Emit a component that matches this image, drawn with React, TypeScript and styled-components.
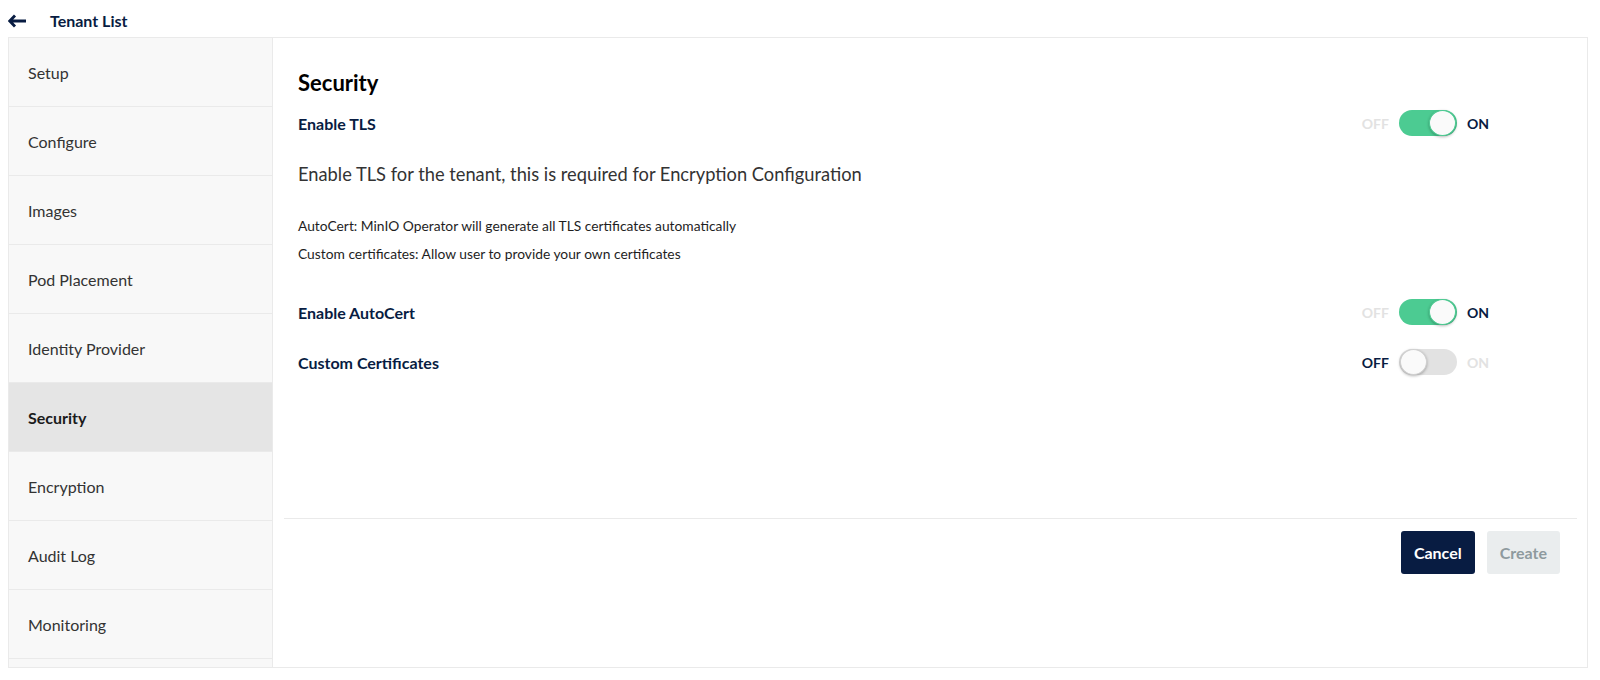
import React, { useState } from 'react'
import styled, { createGlobalStyle } from 'styled-components'

const GlobalStyle = createGlobalStyle`
  html, body {
    margin: 0;
    padding: 0;
    background: #ffffff;
    font-family: Lato, "Noto Sans", sans-serif;
    -webkit-font-smoothing: antialiased;
  }
  * { box-sizing: border-box; }
`

const Page = styled.div`
  width: 1600px;
  height: 680px;
  overflow: hidden;
`

const TopBar = styled.div`
  height: 37px;
  display: flex;
  align-items: center;
  padding: 4px 0 0 8px;
`

const BackLink = styled.a`
  display: flex;
  align-items: center;
  gap: 23px;
  color: #081c42;
  font-size: 16px;
  font-weight: 700;
  text-decoration: none;
  cursor: pointer;
`

const Panel = styled.div`
  display: flex;
  height: 631px;
  margin: 0 12px 0 8px;
  border: 1px solid #eaeaea;
`

const Sidebar = styled.nav`
  width: 264px;
  flex-shrink: 0;
  background: #f8f8f8;
  border-right: 1px solid #eaeaea;
  overflow: hidden;
`

const NavItem = styled.div<{ $active?: boolean }>`
  height: 69px;
  display: flex;
  align-items: center;
  padding-left: 19px;
  border-bottom: 1px solid #eaeaea;
  background: ${p => (p.$active ? '#e5e5e5' : 'transparent')};
  color: ${p => (p.$active ? '#1b1b1b' : '#333333')};
  font-size: 16px;
  font-weight: ${p => (p.$active ? 700 : 400)};
  cursor: pointer;
`

const Content = styled.div`
  flex: 1;
  display: flex;
  flex-direction: column;
  padding: 0 10px 0 11px;
`

const Form = styled.div`
  height: 481px;
  padding: 32px 88px 0 14px;
  border-bottom: 1px solid #eaeaea;
`

const Heading = styled.h3`
  margin: 0 0 12px;
  font-size: 22px;
  line-height: 26px;
  font-weight: 700;
  color: #000000;
`

const SwitchRow = styled.div<{ $gap?: number }>`
  display: flex;
  align-items: center;
  justify-content: space-between;
  height: 30px;
  margin-bottom: ${p => p.$gap ?? 0}px;
`

const RowLabel = styled.label`
  font-size: 16px;
  font-weight: 700;
  color: #081c42;
`

const Description = styled.p`
  margin: 24px 0 26px;
  font-size: 18.3px;
  line-height: 24px;
  color: #333333;
`

const Note = styled.div`
  font-size: 13.8px;
  line-height: 28px;
  color: #1e1e1e;
`

const Notes = styled.div`
  margin-bottom: 29px;
`

const SwitchWrap = styled.div`
  display: flex;
  align-items: center;
  gap: 10px;
`

const SwitchText = styled.span<{ $on: boolean }>`
  font-size: 14px;
  font-weight: 700;
  color: ${p => (p.$on ? '#081c42' : '#e2e2e2')};
`

const Track = styled.button<{ $on: boolean }>`
  position: relative;
  width: 58px;
  height: 26px;
  padding: 0;
  border: none;
  border-radius: 13px;
  background: ${p => (p.$on ? '#4ccb92' : '#e2e2e2')};
  cursor: pointer;
`

const Knob = styled.span<{ $on: boolean }>`
  position: absolute;
  top: 0;
  left: ${p => (p.$on ? '30px' : '1px')};
  width: 27px;
  height: 26px;
  border-radius: 50%;
  background: #fafafa;
  border: 1px solid ${p => (p.$on ? '#4ccb92' : '#d0d0d0')};
  box-shadow: 0 1px 3px rgba(0, 0, 0, 0.3);
`

const Footer = styled.div`
  display: flex;
  justify-content: flex-end;
  gap: 12px;
  padding: 12px 17px 0 0;
`

const Button = styled.button<{ $primary?: boolean }>`
  height: 43px;
  padding: 0 13px;
  border: none;
  border-radius: 3px;
  font-family: Lato, "Noto Sans", sans-serif;
  font-size: 16px;
  font-weight: 700;
  background: ${p => (p.$primary ? '#081c42' : '#eaedee')};
  color: ${p => (p.$primary ? '#ffffff' : '#8e9a9e')};
  cursor: ${p => (p.$primary ? 'pointer' : 'default')};
`

const Toggle = ({ on, onChange }: { on: boolean; onChange: (v: boolean) => void }) => (
  <SwitchWrap>
    <SwitchText $on={!on}>OFF</SwitchText>
    <Track $on={on} onClick={() => onChange(!on)}>
      <Knob $on={on} />
    </Track>
    <SwitchText $on={on}>ON</SwitchText>
  </SwitchWrap>
)

const steps = [
  'Setup',
  'Configure',
  'Images',
  'Pod Placement',
  'Identity Provider',
  'Security',
  'Encryption',
  'Audit Log',
  'Monitoring',
]

const App = () => {
  const [tls, setTls] = useState(true)
  const [autoCert, setAutoCert] = useState(true)
  const [customCerts, setCustomCerts] = useState(false)

  return (
    <Page>
      <GlobalStyle />
      <TopBar>
        <BackLink>
          <svg width="19" height="14" viewBox="0 0 19 14">
            <path d="M7 1.5 L1.8 7 L7 12.5 M2 7 H18" fill="none" stroke="#081c42" strokeWidth="2.8" />
          </svg>
          Tenant List
        </BackLink>
      </TopBar>
      <Panel>
        <Sidebar>
          {steps.map(s => (
            <NavItem key={s} $active={s === 'Security'}>{s}</NavItem>
          ))}
        </Sidebar>
        <Content>
          <Form>
            <Heading>Security</Heading>
            <SwitchRow>
              <RowLabel>Enable TLS</RowLabel>
              <Toggle on={tls} onChange={setTls} />
            </SwitchRow>
            <Description>Enable TLS for the tenant, this is required for Encryption Configuration</Description>
            <Notes>
              <Note>AutoCert: MinIO Operator will generate all TLS certificates automatically</Note>
              <Note>Custom certificates: Allow user to provide your own certificates</Note>
            </Notes>
            <SwitchRow $gap={20}>
              <RowLabel>Enable AutoCert</RowLabel>
              <Toggle on={autoCert} onChange={setAutoCert} />
            </SwitchRow>
            <SwitchRow>
              <RowLabel>Custom Certificates</RowLabel>
              <Toggle on={customCerts} onChange={setCustomCerts} />
            </SwitchRow>
          </Form>
          <Footer>
            <Button $primary>Cancel</Button>
            <Button disabled>Create</Button>
          </Footer>
        </Content>
      </Panel>
    </Page>
  )
}

export default App
